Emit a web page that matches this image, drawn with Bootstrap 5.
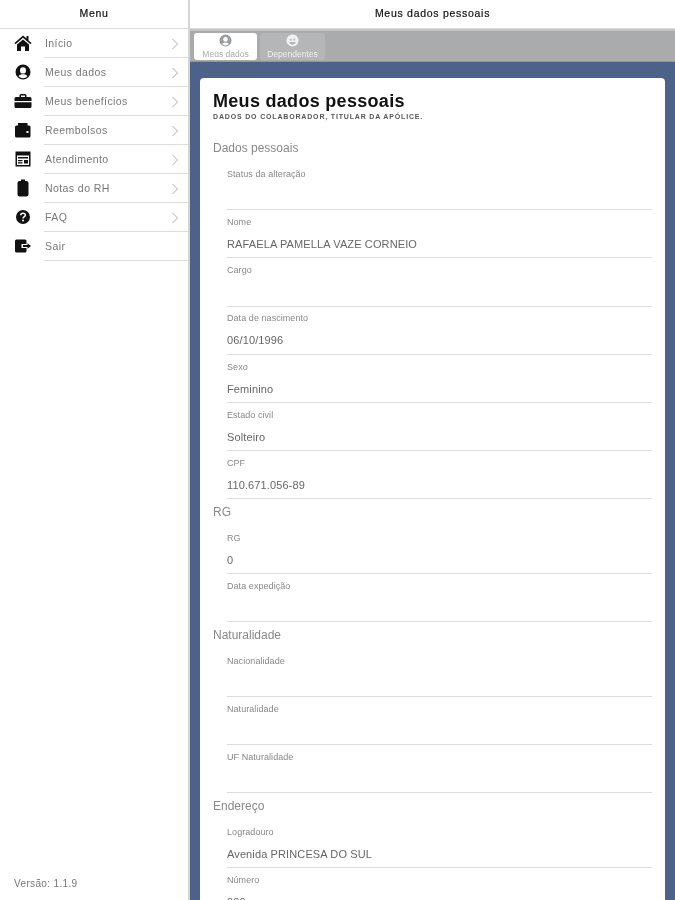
<!DOCTYPE html>
<html lang="pt-BR">
<head>
<meta charset="utf-8">
<title>Meus dados pessoais</title>
<link rel="stylesheet" href="https://cdn.jsdelivr.net/npm/bootstrap@5.3.0/dist/css/bootstrap.min.css">
<style>
html,body{height:900px;overflow:hidden;}
body{font-family:"Liberation Sans",Arial,sans-serif;background:#fff;color:#555;}
.shell{height:900px;filter:blur(.5px);}
.side{width:190px;flex:none;border-right:2px solid #d4d5d7;}
.top-title{height:29px;flex:none;font-size:10.5px;letter-spacing:.72px;color:#111;border-bottom:1px solid #dcdcdc;-webkit-text-stroke:.2px #111;}
.menu-row{height:29px;padding-left:45px;padding-right:10px;position:relative;font-size:10.5px;letter-spacing:.42px;color:#777;}
.menu-row>.rule{position:absolute;left:44px;right:0;bottom:0;border-bottom:1px solid #dcdcdc;}
.menu-ic{position:absolute;left:14px;top:5px;width:18px;height:18px;}
.chev{width:8px;height:12px;margin-right:-1px;}
.ver{font-size:10px;letter-spacing:.35px;color:#777;padding:0 0 9px 14px;}
.tabbar{height:33px;flex:none;background:#a9abad;border-top:2px solid #c4c5c7;border-bottom:1px solid #93969b;padding:2px 0 1px 4px;gap:3px;}
.tabx{height:27px;border-radius:3px;font-size:8.5px;line-height:8px;padding-top:1px;}
.tabx svg{width:13px;height:13px;display:block;margin-bottom:3px;}
.tabx.on{width:63px;background:#fff;color:#a9abad;}
.tabx.off{width:65px;background:#b5b6b8;color:#eee;}
.stage{background:#4d6289;padding:16px 10px 0;flex:1 1 0;min-height:0;}
.sheet{background:#fff;border-radius:4px 4px 0 0;padding:12px 13px 0;height:900px;}
.big{font-size:18px;font-weight:700;letter-spacing:.3px;line-height:22px;color:#111;margin:0;}
.sub{font-size:7px;font-weight:700;letter-spacing:.83px;line-height:9px;color:#555;text-transform:uppercase;margin:0 0 20px;}
.sec{font-size:12px;letter-spacing:0;line-height:14px;color:#888;margin:0 0 7px;}
.fld{height:48.2px;margin-left:14px;border-bottom:1px solid #dcdcdc;padding-top:6.9px;}
.fld label{display:block;font-size:9px;letter-spacing:.06px;line-height:10px;color:#888;margin:0 0 10px;}
.fld div{font-size:11px;letter-spacing:.12px;line-height:14px;color:#666;min-height:14px;}
.sec.next{margin-top:5.5px;}
</style>
</head>
<body>
<div class="d-flex shell">
  <nav class="side d-flex flex-column">
    <div class="top-title d-flex align-items-center justify-content-center">Menu</div>
    <div class="menu-row d-flex align-items-center justify-content-between"><svg class="menu-ic" viewBox="0 0 18 18"><path fill="#111" d="M9 1.500 .5 9l1 1.200L9 3.800l7.500 6.400 1-1.200-3-2.600V2h-2v2.600zM3 10.600V17h4v-4.500h4V17h4v-6.400L9 5.400z"/></svg><span>Início</span><svg class="chev" viewBox="0 0 8 12"><path d="M1.500 1 6.500 6 1.500 11" fill="none" stroke="#aaa" stroke-width="1"/></svg><i class="rule"></i></div>
    <div class="menu-row d-flex align-items-center justify-content-between"><svg class="menu-ic" viewBox="0 0 18 18"><path fill="#111" fill-rule="evenodd" d="M9 1.500a7.500 7.500 0 1 0 0 15 7.500 7.500 0 0 0 0-15zM9 4.200a3 3.200 0 1 1 0 6.400 3 3.200 0 0 1 0-6.400zM4.600 13.200C5.400 11.900 7 11.300 9 11.300s3.600.6 4.400 1.900A5.800 5.800 0 0 1 9 15.200a5.800 5.800 0 0 1-4.400-2z"/></svg><span>Meus dados</span><svg class="chev" viewBox="0 0 8 12"><path d="M1.500 1 6.500 6 1.500 11" fill="none" stroke="#aaa" stroke-width="1"/></svg><i class="rule"></i></div>
    <div class="menu-row d-flex align-items-center justify-content-between"><svg class="menu-ic" viewBox="0 0 18 18"><path fill="#111" fill-rule="evenodd" d="M5.500 3.500A1.500 1.500 0 0 1 7 2h4a1.500 1.500 0 0 1 1.500 1.500V5h3.500A1.500 1.500 0 0 1 17.500 6.500V9H.5V6.500A1.500 1.500 0 0 1 2 5h3.500zM7 3.400V5h4V3.400zM.5 10.200h17v4.300A1.500 1.500 0 0 1 16 16H2a1.500 1.500 0 0 1-1.500-1.500z"/></svg><span>Meus benefícios</span><svg class="chev" viewBox="0 0 8 12"><path d="M1.500 1 6.500 6 1.500 11" fill="none" stroke="#aaa" stroke-width="1"/></svg><i class="rule"></i></div>
    <div class="menu-row d-flex align-items-center justify-content-between"><svg class="menu-ic" viewBox="0 0 18 18"><path fill="#111" fill-rule="evenodd" d="M4 2h9.500v2.500H4zM2.500 4.500H15A1.500 1.500 0 0 1 16.500 6v9a1.500 1.500 0 0 1-1.500 1.500H2.500A1.500 1.500 0 0 1 1 15V6a1.500 1.500 0 0 1 1.500-1.500zM12.500 10v2h2v-2z"/></svg><span>Reembolsos</span><svg class="chev" viewBox="0 0 8 12"><path d="M1.500 1 6.500 6 1.500 11" fill="none" stroke="#aaa" stroke-width="1"/></svg><i class="rule"></i></div>
    <div class="menu-row d-flex align-items-center justify-content-between"><svg class="menu-ic" viewBox="0 0 18 18"><path fill="#111" fill-rule="evenodd" d="M1.500 1.500h15v15h-15zM3 5.500v9.500h12V5.500zM4 7h10v1.500H4zM4 10h4.500v1.200H4zM4 12.300h4.500v1.200H4zM10 10h4v3.500h-4z"/></svg><span>Atendimento</span><svg class="chev" viewBox="0 0 8 12"><path d="M1.500 1 6.500 6 1.500 11" fill="none" stroke="#aaa" stroke-width="1"/></svg><i class="rule"></i></div>
    <div class="menu-row d-flex align-items-center justify-content-between"><svg class="menu-ic" viewBox="0 0 18 18"><path fill="#111" d="M7 .5h4V2h1.500A2 2 0 0 1 14.500 4v11.500a2 2 0 0 1-2 2h-7a2 2 0 0 1-2-2V4a2 2 0 0 1 2-2H7z"/></svg><span>Notas do RH</span><svg class="chev" viewBox="0 0 8 12"><path d="M1.500 1 6.500 6 1.500 11" fill="none" stroke="#aaa" stroke-width="1"/></svg><i class="rule"></i></div>
    <div class="menu-row d-flex align-items-center justify-content-between"><svg class="menu-ic" viewBox="0 0 18 18"><circle cx="9" cy="9" r="7" fill="#111"/><path d="M6.700 7.200C6.800 5.900 7.800 5.200 9 5.200c1.300 0 2.300.8 2.300 2 0 1.800-2.300 1.700-2.300 3.300" fill="none" stroke="#fff" stroke-width="1.500"/><circle cx="9" cy="12.500" r="1" fill="#fff"/></svg><span>FAQ</span><svg class="chev" viewBox="0 0 8 12"><path d="M1.500 1 6.500 6 1.500 11" fill="none" stroke="#aaa" stroke-width="1"/></svg><i class="rule"></i></div>
    <div class="menu-row d-flex align-items-center"><svg class="menu-ic" viewBox="0 0 18 18"><path fill="#111" d="M1 4A1.500 1.500 0 0 1 2.500 2.500H11A1.500 1.500 0 0 1 12.500 4V7H7.500v4h5v3A1.500 1.500 0 0 1 11 15.500H2.500A1.500 1.500 0 0 1 1 14zM9 8h4.500V6.200L17 9l-3.500 2.800V10H9z"/></svg><span>Sair</span><i class="rule"></i></div>
    <div class="ver mt-auto">Versão: 1.1.9</div>
  </nav>
  <main class="flex-grow-1 d-flex flex-column overflow-hidden">
    <div class="top-title d-flex align-items-center justify-content-center fw-normal">Meus dados pessoais</div>
    <div class="tabbar d-flex">
      <div class="tabx on d-flex flex-column align-items-center"><svg viewBox="0 0 14 14"><path fill="#9a9c9f" fill-rule="evenodd" d="M7 .5a6.500 6.500 0 1 0 0 13 6.500 6.500 0 0 0 0-13zM7 3a2.500 2.700 0 1 1 0 5.400A2.500 2.700 0 0 1 7 3zM3.300 10.700C4 9.700 5.300 9.300 7 9.300s3 .4 3.700 1.400A5 5 0 0 1 7 12.300a5 5 0 0 1-3.700-1.600z"/></svg>Meus dados</div>
      <div class="tabx off d-flex flex-column align-items-center"><svg viewBox="0 0 14 14"><path fill="#f2f2f2" fill-rule="evenodd" d="M7 .5a6.500 6.500 0 1 0 0 13 6.500 6.500 0 0 0 0-13zM4 5h2v2H4zM8 5h2v2H8zM3.500 8.500h7C10 10.500 8.700 11.500 7 11.500S4 10.500 3.500 8.500z"/></svg>Dependentes</div>
    </div>
    <div class="stage">
      <div class="sheet">
        <h1 class="big">Meus dados pessoais</h1>
        <p class="sub">Dados do colaborador, titular da apólice.</p>
        <h2 class="sec fw-normal">Dados pessoais</h2>
        <div class="fld"><label>Status da alteração</label><div></div></div>
        <div class="fld"><label>Nome</label><div>RAFAELA PAMELLA VAZE CORNEIO</div></div>
        <div class="fld"><label>Cargo</label><div></div></div>
        <div class="fld"><label>Data de nascimento</label><div>06/10/1996</div></div>
        <div class="fld"><label>Sexo</label><div>Feminino</div></div>
        <div class="fld"><label>Estado civil</label><div>Solteiro</div></div>
        <div class="fld"><label>CPF</label><div>110.671.056-89</div></div>
        <h2 class="sec next fw-normal">RG</h2>
        <div class="fld"><label>RG</label><div>0</div></div>
        <div class="fld"><label>Data expedição</label><div></div></div>
        <h2 class="sec next fw-normal">Naturalidade</h2>
        <div class="fld"><label>Nacionalidade</label><div></div></div>
        <div class="fld"><label>Naturalidade</label><div></div></div>
        <div class="fld"><label>UF Naturalidade</label><div></div></div>
        <h2 class="sec next fw-normal">Endereço</h2>
        <div class="fld"><label>Logradouro</label><div>Avenida PRINCESA DO SUL</div></div>
        <div class="fld"><label>Número</label><div>000</div></div>
      </div>
    </div>
  </main>
</div>
</body>
</html>
